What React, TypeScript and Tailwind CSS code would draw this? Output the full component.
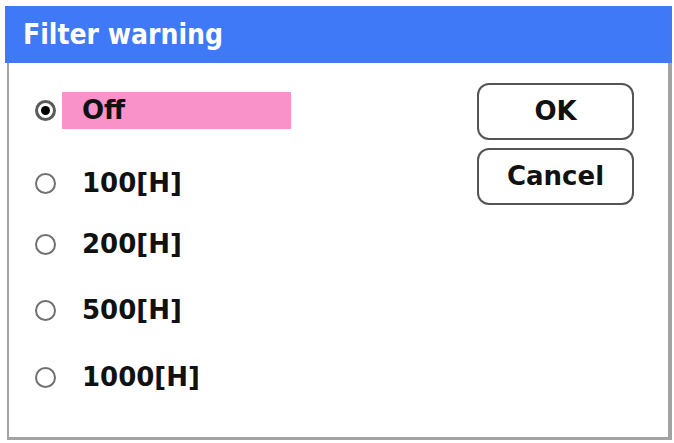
import React from "react";

const font = { fontFamily: '"DejaVu Sans", "Liberation Sans", Arial, sans-serif' };
const titleFont = { fontFamily: '"DejaVu Sans Condensed", "DejaVu Sans", "Liberation Sans", sans-serif' };

function Radio({ checked }: { checked?: boolean }) {
  return (
    <div
      className={
        "w-[21px] h-[21px] rounded-full bg-white flex items-center justify-center shrink-0 " +
        (checked ? "border-[3px] border-[#5a5a5a]" : "border-2 border-[#707070]")
      }
    >
      {checked && <div className="w-[9px] h-[9px] rounded-full bg-black" />}
    </div>
  );
}

function Row({ label, checked, className }: { label: string; checked?: boolean; className?: string }) {
  return (
    <div className={"flex items-center h-[37px] " + (className ?? "")}>
      <div className="w-[55px] flex justify-end pr-[6px]">
        <Radio checked={checked} />
      </div>
      <div
        className={
          "h-[37px] w-[229px] flex items-center pl-[20px] text-[26px] font-bold text-[#111]" +
          (checked ? " bg-[#f892c8]" : "")
        }
      >
        {label}
      </div>
    </div>
  );
}

function Btn({ label }: { label: string }) {
  return (
    <div className="w-[157px] h-[57px] rounded-[12px] border-2 border-[#555] bg-white flex items-center justify-center text-[26px] font-bold text-[#111]">
      {label}
    </div>
  );
}

export default function App() {
  return (
    <div className="w-[674px] h-[443px] bg-white pt-[6px] pl-[5px]" style={font}>
      <div
        className="w-[667px] h-[57px] bg-[#3f79f8] flex items-center pl-[18px] text-[28px] font-bold text-white"
        style={titleFont}
      >
        Filter warning
      </div>
      <div className="ml-[2px] w-[665px] h-[377px] border-l-2 border-r-[4px] border-b-[3px] border-[#a3a3a3] bg-white flex">
        <div className="flex flex-col pt-[29px] -ml-[2px]">
          <Row label="Off" checked />
          <Row label="100[H]" className="mt-[36px]" />
          <Row label="200[H]" className="mt-[24px]" />
          <Row label="500[H]" className="mt-[29px]" />
          <Row label="1000[H]" className="mt-[30px]" />
        </div>
        <div className="flex flex-col gap-[8px] pt-[20px] ml-[186px]">
          <Btn label="OK" />
          <Btn label="Cancel" />
        </div>
      </div>
    </div>
  );
}
